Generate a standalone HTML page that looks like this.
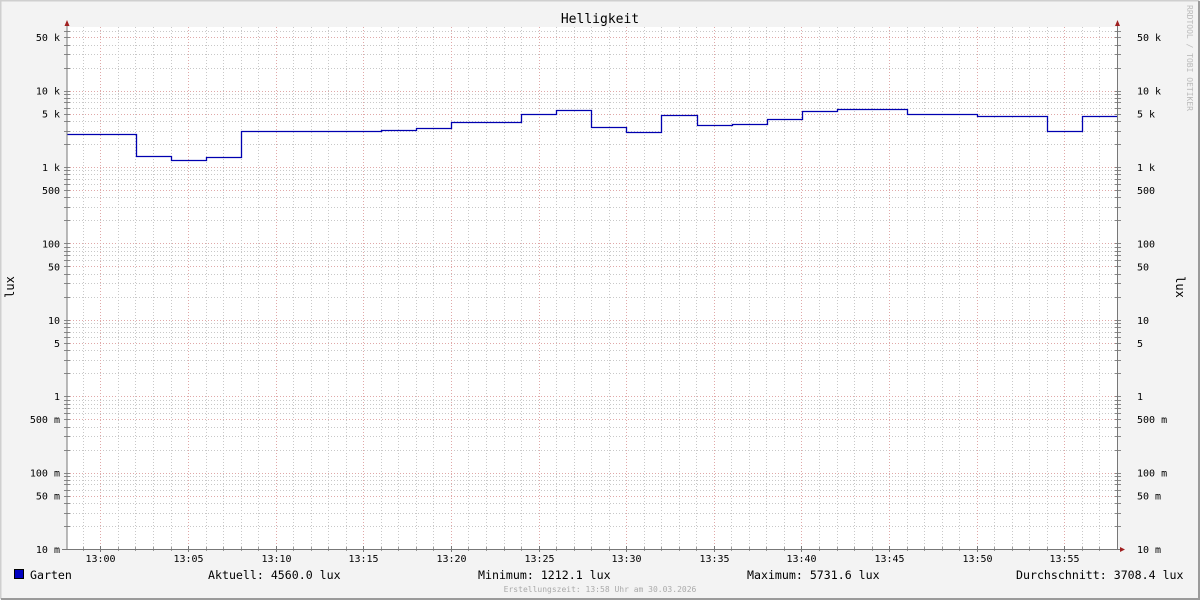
<!DOCTYPE html>
<html><head><meta charset="utf-8"><style>
html,body{margin:0;padding:0;}
body{width:1200px;height:600px;overflow:hidden;background:#f3f3f3;}
svg{display:block;font-family:"DejaVu Sans Mono","Liberation Mono",monospace;}
</style></head><body>
<svg id="g" width="1200" height="600" xmlns="http://www.w3.org/2000/svg">
<rect x="0" y="0" width="1200" height="600" fill="#f3f3f3"/>
<path d="M0.5 599V0.5H1199" stroke="#cfcfcf" stroke-width="2" fill="none"/>
<path d="M1199 1V599H1" stroke="#9a9a9a" stroke-width="2" fill="none"/>
<rect x="67" y="27" width="1051" height="522" fill="#fff"/>
<g id="grid"></g>
<g id="data"></g>
<line x1="67" y1="22" x2="67" y2="549.5" stroke="#777" stroke-width="1"/>
<line x1="1117.5" y1="22" x2="1117.5" y2="549.5" stroke="#777" stroke-width="1"/>
<line x1="62" y1="549.5" x2="1122" y2="549.5" stroke="#777" stroke-width="1"/>
<polygon points="64.5,26 69.5,26 67,20" fill="#a02020"/>
<polygon points="1115,26 1120,26 1117.5,20" fill="#a02020"/>
<polygon points="1120,547 1120,552 1125,549.5" fill="#a02020"/>
<text x="600" y="23" font-size="13" text-anchor="middle" fill="#000">Helligkeit</text>
<text transform="translate(14,287) rotate(-90)" font-size="12" text-anchor="middle">lux</text>
<text transform="translate(1176,287) rotate(90)" font-size="12" text-anchor="middle">lux</text>
<text transform="translate(1187,5) rotate(90)" font-size="8" fill="#bbb">RRDTOOL / TOBI OETIKER</text>
<g id="lbl" font-size="10" fill="#000"></g>
<rect x="14.5" y="569.5" width="9" height="9" fill="#0000c0" stroke="#000" stroke-width="1"/>
<g font-size="11.6" fill="#000">
<text x="30" y="579">Garten</text>
<text x="208" y="579">Aktuell: 4560.0 lux</text>
<text x="478" y="579">Minimum: 1212.1 lux</text>
<text x="747" y="579">Maximum: 5731.6 lux</text>
<text x="1016" y="579">Durchschnitt: 3708.4 lux</text>
</g>
<text x="600" y="592" font-size="8" fill="#aaa" text-anchor="middle">Erstellungszeit: 13:58 Uhr am 30.03.2026</text>
</svg>
<script>
var NS="http://www.w3.org/2000/svg";
function el(p,t,a,txt){var e=document.createElementNS(NS,t);for(var k in a)e.setAttribute(k,a[k]);if(txt)e.textContent=txt;p.appendChild(e);return e;}
var grid=document.getElementById('grid'),lbl=document.getElementById('lbl'),data=document.getElementById('data');
function Y(v){return 549-(Math.log10(v)+2)*76.4;}
for(var d=-2;d<=4;d++){for(var m=1;m<=9;m++){var v=m*Math.pow(10,d);var y=Math.round(Y(v))+0.5;if(y<27)continue;
var major=(m==1||m==5);
el(grid,'line',{x1:67,x2:1117,y1:y,y2:y,stroke:major?'#e0a8a8':'#c8c8c8','stroke-dasharray':'1,2','stroke-width':1});
el(grid,'line',{x1:64,x2:70,y1:y,y2:y,stroke:'#888'});el(grid,'line',{x1:1115,x2:1121,y1:y,y2:y,stroke:'#888'});
}}
var labs=[[50000,'50 k'],[10000,'10 k'],[5000,'5 k'],[1000,'1 k'],[500,'500'],[100,'100'],[50,'50'],[10,'10'],[5,'5'],[1,'1'],[0.5,'500 m'],[0.1,'100 m'],[0.05,'50 m'],[0.01,'10 m']];
labs.forEach(function(l){var y=Y(l[0])+4;el(lbl,'text',{x:60,y:y,'text-anchor':'end'},l[1]);el(lbl,'text',{x:1137,y:y},l[1]);});
var px=17.527,x0=100.4;
for(var i=-1;i<=58;i++){var x=Math.round(x0+i*px)+0.5;if(x<68||x>1117)continue;var major=(i%5==0);
el(grid,'line',{x1:x,x2:x,y1:27,y2:549,stroke:major?'#e0a8a8':'#c8c8c8','stroke-dasharray':'1,2'});
if(major){el(grid,'line',{x1:x,x2:x,y1:546,y2:552,stroke:'#777'});var mm=i;el(lbl,'text',{x:x,y:562,'text-anchor':'middle'},'13:'+(mm<10?'0':'')+mm);}
else el(grid,'line',{x1:x,x2:x,y1:547,y2:551,stroke:'#999'});
}
var s=[[67,134],[136,156],[171,160],[206,157],[241,131],[381,130],[416,128],[451,122],[521,114],[556,110],[591,127],[626,132],[661,115],[697,125],[732,124],[767,119],[802,111],[837,109],[907,114],[977,116],[1047,131],[1082,116],[1117,116]];
var d="M"+s[0][0]+" "+(s[0][1]+0.5);
for(var k=1;k<s.length;k++){d+=" H"+(s[k][0]+0.5)+" V"+(s[k][1]+0.5);}
el(data,'path',{d:d,fill:'none',stroke:'#0000b0','stroke-width':1.3});
</script>
</body></html>
